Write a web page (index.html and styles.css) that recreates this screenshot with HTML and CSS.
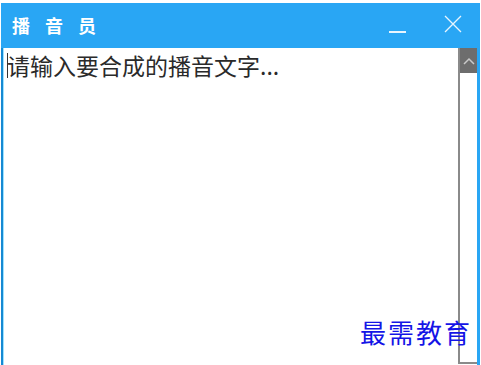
FILE: index.html
```html
<!DOCTYPE html>
<html lang="zh-CN">

<head>
    <meta charset="UTF-8">
    <meta name="viewport" content="width=device-width, initial-scale=1.0">
    <title>播音员</title>
    <link rel="stylesheet" href="styles.css">
</head>

<body>
    <!-- Window -->
    <div class="window">
        <!-- Title Bar -->
        <div class="title-bar">
            <span class="title">播音员</span>
            <div class="controls">
                <span class="btn-min"></span>
                <svg class="btn-close" width="18" height="18" viewBox="0 0 18 18">
                    <path d="M1 1 L17 17 M17 1 L1 17" stroke="#e8f5fe" stroke-width="1.3" fill="none" />
                </svg>
            </div>
        </div>
        <!-- Text Area -->
        <div class="content">
            <div class="editor">
                <p class="placeholder"><span class="caret"></span>请输入要合成的播音文字...</p>
            </div>
            <div class="scrollbar">
                <div class="arrow-up">
                    <svg width="12" height="8" viewBox="0 0 12 8">
                        <path d="M1 7 L6 2 L11 7" stroke="#c9c9c9" stroke-width="1.5" fill="none" />
                    </svg>
                </div>
                <div class="track"></div>
            </div>
            <!-- Watermark lies over the scrollbar -->
            <div class="watermark">最需教育</div>
        </div>
    </div>
</body>

</html>
```

FILE: styles.css
```css
/* General Reset */
* {
    margin: 0;
    padding: 0;
    box-sizing: border-box;
}

body {
    width: 481px;
    height: 365px;
    background: #fff;
    overflow: hidden;
    font-family: "Noto Sans CJK SC", sans-serif;
}

.window {
    margin: 3px 1px 0 1px;
    height: 362px;
    display: flex;
    flex-direction: column;
}

/* Title Bar */
.title-bar {
    height: 45px;
    background-color: #29a6f4;
    display: flex;
    align-items: center;
    justify-content: space-between;
    padding-left: 11px;
    padding-right: 18px;
}

.title {
    color: #fff;
    font-size: 18px;
    font-weight: bold;
    letter-spacing: 15px;
    margin-top: -2px;
}

.controls {
    display: flex;
    align-items: center;
    gap: 38px;
}

.btn-min {
    width: 17px;
    height: 2px;
    background: #e8f5fe;
    margin-top: 13px;
}

.btn-close {
    margin-top: -3px;
}

/* Content */
.content {
    position: relative;
    flex: 1;
    display: flex;
    border-left: 2px solid #1689d3;
    border-right: 3px solid #29a6f4;
}

.editor {
    flex: 1;
    border-left: 1px solid #9fe3ff;
    padding: 2px 0 0 3px;
}

.placeholder {
    color: #2a2a2a;
    font-size: 23px;
    line-height: 30px;
    display: flex;
    align-items: center;
}

.caret {
    width: 1px;
    height: 25px;
    background: #333;
    margin-right: -1px;
}

.watermark {
    position: absolute;
    right: 5px;
    bottom: 18px;
    color: #1414e6;
    font-size: 26px;
    line-height: 30px;
    letter-spacing: 2px;
}

/* Scrollbar */
.scrollbar {
    width: 19px;
    display: flex;
    flex-direction: column;
    border-left: 2px solid #8a8a8a;
    border-bottom: 2px solid #8a8a8a;
    margin-bottom: 1px;
}

.arrow-up {
    height: 25px;
    background: #6d6d6d;
    display: flex;
    align-items: center;
    justify-content: center;
}

.track {
    flex: 1;
    background: #fff;
}
```
